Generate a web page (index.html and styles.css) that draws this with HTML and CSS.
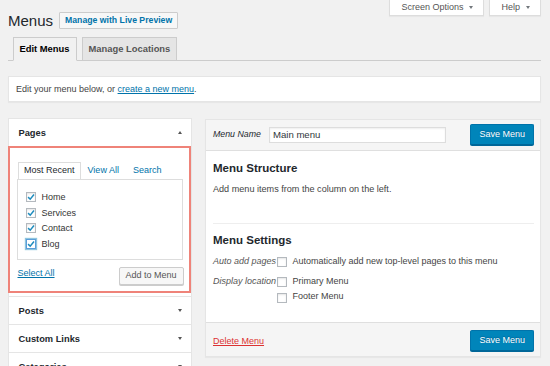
FILE: index.html
```html
<!DOCTYPE html>
<html lang="en">
<head>
<meta charset="utf-8">
<title>Menus</title>
<link rel="stylesheet" href="styles.css">
</head>
<body>
<div class="wrap">
  <div class="top">
    <div class="title-row">
      <h1 class="title">Menus</h1>
      <a class="btn-outline">Manage with Live Preview</a>
    </div>
    <div class="meta-links">
      <span class="meta-btn">Screen Options<span class="caret"></span></span>
      <span class="meta-btn">Help<span class="caret"></span></span>
    </div>
  </div>

  <div class="tabs">
    <span class="tab active">Edit Menus</span>
    <span class="tab">Manage Locations</span>
  </div>

  <div class="notice">Edit your menu below, or <a class="link">create a new menu</a>.</div>

  <div class="columns">
    <div class="side">
      <div class="acc">
        <div class="acc-head">Pages <span class="arrow-up"></span></div>
        <div class="acc-body">
          <div class="ptabs">
            <span class="ptab active">Most Recent</span>
            <span class="ptab">View All</span>
            <span class="ptab">Search</span>
          </div>
          <div class="plist">
            <div class="pitem"><span class="cb"><svg width="8" height="8" viewBox="0 0 8 8"><path d="M1.1 4.1 L3.2 6.2 L7 1.5" fill="none" stroke="#1e8cbe" stroke-width="1.5"/></svg></span>Home</div>
            <div class="pitem"><span class="cb"><svg width="8" height="8" viewBox="0 0 8 8"><path d="M1.1 4.1 L3.2 6.2 L7 1.5" fill="none" stroke="#1e8cbe" stroke-width="1.5"/></svg></span>Services</div>
            <div class="pitem"><span class="cb"><svg width="8" height="8" viewBox="0 0 8 8"><path d="M1.1 4.1 L3.2 6.2 L7 1.5" fill="none" stroke="#1e8cbe" stroke-width="1.5"/></svg></span>Contact</div>
            <div class="pitem"><span class="cb cb-focus"><svg width="8" height="8" viewBox="0 0 8 8"><path d="M1.1 4.1 L3.2 6.2 L7 1.5" fill="none" stroke="#1e8cbe" stroke-width="1.5"/></svg></span>Blog</div>
          </div>
          <div class="pactions">
            <a class="link select-all">Select All</a>
            <span class="btn-secondary">Add to Menu</span>
          </div>
        </div>
      </div>
      <div class="acc">
        <div class="acc-head">Posts <span class="arrow-down"></span></div>
      </div>
      <div class="acc">
        <div class="acc-head">Custom Links <span class="arrow-down"></span></div>
      </div>
      <div class="acc">
        <div class="acc-head">Categories <span class="arrow-down"></span></div>
      </div>
    </div>

    <div class="panel">
      <div class="panel-head">
        <label class="name-label">Menu Name</label>
        <span class="name-input">Main menu</span>
        <span class="btn-primary">Save Menu</span>
      </div>
      <div class="panel-body">
        <h3 class="h3">Menu Structure</h3>
        <p class="desc">Add menu items from the column on the left.</p>
        <div class="sep"></div>
        <h3 class="h3 settings-title">Menu Settings</h3>
        <div class="setting-row row-auto">
          <span class="setting-label">Auto add pages</span>
          <div class="options">
            <div class="option"><span class="cb empty"></span>Automatically add new top-level pages to this menu</div>
          </div>
        </div>
        <div class="setting-row">
          <span class="setting-label">Display location</span>
          <div class="options">
            <div class="option"><span class="cb empty"></span>Primary Menu</div>
            <div class="option"><span class="cb empty"></span>Footer Menu</div>
          </div>
        </div>
      </div>
      <div class="panel-foot">
        <a class="delete">Delete Menu</a>
        <span class="btn-primary">Save Menu</span>
      </div>
    </div>
  </div>
</div>
</body>
</html>
```

FILE: styles.css
```css
* { box-sizing: border-box; }

html, body {
  margin: 0;
  padding: 0;
}

body {
  background: #f1f1f1;
  font-family: "Liberation Sans", Arial, sans-serif;
  font-size: 9px;
  color: #444;
  overflow: hidden;
}

.wrap {
  padding: 0 9px 0 8px;
}

/* Top bar */
.top {
  display: flex;
  justify-content: space-between;
  align-items: flex-start;
  height: 37px;
}

.title-row {
  display: flex;
  align-items: center;
  margin-top: 11.5px;
}

.title {
  margin: 0;
  font-size: 15px;
  font-weight: 400;
  line-height: 18px;
  color: #23282d;
}

.btn-outline {
  margin-left: 6px;
  height: 17.5px;
  padding: 0 5px;
  border: 1px solid #ccc;
  background: #f7f7f7;
  color: #0073aa;
  font-size: 8.7px;
  font-weight: 700;
  line-height: 15.5px;
  border-radius: 1px;
}

.meta-links {
  display: flex;
  gap: 5px;
}

.meta-btn {
  display: flex;
  align-items: center;
  height: 16px;
  padding: 0 10px 0 11px;
  background: #fff;
  border: 1px solid #ddd;
  border-top: none;
  color: #555;
  font-size: 9px;
  line-height: 15px;
  box-shadow: 0 1px 1px rgba(0,0,0,.04);
}

.caret {
  margin-left: 6px;
  width: 0;
  height: 0;
  border-left: 2.5px solid transparent;
  border-right: 2.5px solid transparent;
  border-top: 3.5px solid #72777c;
}

/* Tabs */
.tabs {
  display: flex;
  gap: 5px;
  height: 24px;
  padding-left: 4.5px;
  border-bottom: 1px solid #ccc;
}

.tab {
  height: 24px;
  padding: 0 6px;
  border: 1px solid #ccc;
  background: #e5e5e5;
  color: #555;
  font-size: 9.4px;
  font-weight: 700;
  line-height: 22px;
}

.tab.active {
  background: #f1f1f1;
  border-bottom-color: #f1f1f1;
  color: #000;
}

/* Notice */
.notice {
  margin-top: 15px;
  padding: 6px 7px 5px;
  background: #fff;
  border: 1px solid #e5e5e5;
  box-shadow: 0 1px 1px rgba(0,0,0,.04);
  line-height: 13px;
  color: #444;
}

.link {
  color: #0073aa;
  text-decoration: underline;
}

/* Columns */
.columns {
  display: flex;
  align-items: flex-start;
  gap: 13px;
  margin-top: 16px;
}

.side {
  width: 184px;
  flex: none;
  display: flex;
  flex-direction: column;
}

.acc {
  background: #fff;
  border: 1px solid #e5e5e5;
  border-top: none;
}

.acc:first-child {
  border-top: 1px solid #e5e5e5;
}

.acc-head {
  display: flex;
  justify-content: space-between;
  align-items: center;
  height: 27px;
  padding: 0 9.5px 0 9.5px;
  font-size: 9.3px;
  font-weight: 700;
  color: #23282d;
}

.arrow-up,
.arrow-down {
  width: 0;
  height: 0;
  border-left: 2px solid transparent;
  border-right: 2px solid transparent;
}

.arrow-up { border-bottom: 3px solid #555; }
.arrow-down { border-top: 3px solid #555; }

.acc-body {
  margin: 0 0 3px -1px;
  border: 2px solid #ef8379;
  padding: 14px 6px 6.4px 7px;
}

.ptabs {
  display: flex;
  margin-left: 1px;
}

.ptab {
  height: 17px;
  padding: 0 6px;
  color: #0073aa;
  line-height: 15px;
  border: 1px solid transparent;
  border-bottom: none;
  font-size: 9px;
}

.ptab.active {
  padding: 0 5px;
  margin-right: 0;
  margin-bottom: -1px;
  background: #fff;
  border-color: #ddd;
  color: #23282d;
  position: relative;
  z-index: 1;
}

.plist {
  border: 1px solid #ddd;
  background: #fff;
  padding: 9.5px 8px 7.5px;
}

.pitem {
  display: flex;
  align-items: center;
  gap: 5px;
  height: 15.5px;
  color: #333;
  font-size: 9px;
}

.cb {
  width: 10.4px;
  height: 10.4px;
  flex: none;
  display: flex;
  align-items: center;
  justify-content: center;
  border: 1px solid #b4b9be;
  background: #fff;
  box-shadow: inset 0 1px 2px rgba(0,0,0,.1);
}

.cb-focus {
  border-color: #5b9dd9;
  box-shadow: 0 0 1px 1px rgba(30,140,190,.5);
}

.pactions {
  display: flex;
  justify-content: space-between;
  align-items: flex-start;
  margin-top: 7.4px;
}

.select-all {
  line-height: 13px;
  margin-left: 0.5px;
}

.btn-secondary {
  height: 17.6px;
  padding: 0 6px;
  border: 1px solid #ccc;
  border-radius: 2px;
  background: #f7f7f7;
  box-shadow: 0 1px 0 #ccc;
  color: #555;
  line-height: 15.6px;
  margin-right: -0.6px;
}

/* Right panel */
.panel {
  flex: 1;
  margin-top: 1px;
  background: #fff;
  border: 1px solid #e5e5e5;
  box-shadow: 0 1px 1px rgba(0,0,0,.04);
}

.panel-head {
  display: flex;
  align-items: center;
  padding: 4.3px 6px 5px 7px;
  background: #f5f5f5;
  border-bottom: 1px solid #dfdfdf;
}

.name-label {
  font-style: italic;
  color: #23282d;
  font-size: 8.8px;
  line-height: 13px;
}

.name-input {
  margin-left: 8px;
  width: 176.7px;
  height: 16px;
  padding: 0 3px;
  border: 1px solid #ddd;
  background: #fff;
  box-shadow: inset 0 1px 2px rgba(0,0,0,.07);
  color: #32373c;
  font-size: 9.6px;
  line-height: 14px;
}

.btn-primary {
  margin-left: auto;
  height: 21px;
  padding: 0 8px;
  background: #0085ba;
  border: 1px solid #0073aa;
  border-bottom-color: #006799;
  border-radius: 2px;
  box-shadow: 0 1px 0 #006799;
  color: #fff;
  font-size: 9px;
  line-height: 19px;
  text-shadow: 0 -1px 1px #006799;
}

.panel-body {
  padding: 10px 7px 19px;
}

.h3 {
  margin: 0;
  font-size: 11.5px;
  font-weight: 700;
  line-height: 14px;
  color: #23282d;
}

.desc {
  margin: 7.3px 0 0;
  font-size: 9.1px;
  line-height: 13px;
  color: #444;
}

.sep {
  margin: 27.5px -1px 0 0;
  border-top: 1px solid #eee;
}

.settings-title {
  margin-top: 9.2px;
}

.setting-row {
  display: flex;
  line-height: 13px;
}

.row-auto {
  margin-top: 7.3px;
  margin-bottom: 7px;
}

.setting-label {
  width: 64px;
  flex: none;
  font-style: italic;
  color: #555;
  white-space: nowrap;
}

.options {
  display: flex;
  flex-direction: column;
  gap: 2.7px;
}

.option {
  display: flex;
  align-items: flex-start;
  gap: 5px;
  color: #444;
}

.option .cb {
  margin-top: 2.5px;
}

.panel-foot {
  display: flex;
  align-items: center;
  justify-content: space-between;
  padding: 6.3px 6px 5px 7px;
  background: #f5f5f5;
  border-top: 1px solid #dfdfdf;
}

.delete {
  color: #dc3232;
  text-decoration: underline;
  line-height: 13px;
  margin-top: 2px;
}
```
